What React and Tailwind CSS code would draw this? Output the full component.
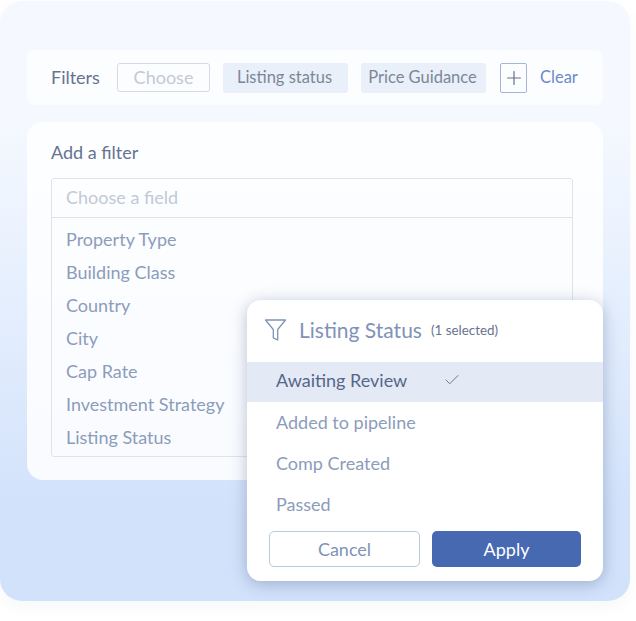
import React from 'react';
import { Check, Plus } from 'lucide-react';

const FIELDS = ['Property Type', 'Building Class', 'Country', 'City', 'Cap Rate', 'Investment Strategy', 'Listing Status'];
const STATUSES = ['Added to pipeline', 'Comp Created', 'Passed'];

const FilterIcon = () => (
  <svg width="23" height="24" viewBox="0 0 23 24" fill="none" stroke="#7f93b8" strokeWidth="1.3" strokeLinejoin="round">
    <path d="M1.5 2h20l-7.8 9.5v10.5l-4.4-2.2v-8.3z" />
  </svg>
);

const App = () => {
  return (
    <div className="w-[636px] h-[621px] bg-white pt-px font-['Lato',sans-serif]">
      <div className="relative w-[630px] h-[600px] rounded-[22px] bg-gradient-to-b from-[#f5f9ff] from-20% to-[#d2e2fb] to-85% px-[27px] pt-[49px] shadow-[0_6px_14px_rgba(120,130,150,0.06)]">
        {/* Filter bar */}
        <div className="h-[55px] rounded-lg bg-white/70 flex items-center pl-6 text-[18px]">
          <span className="w-[66px] text-[#66738f]">Filters</span>
          <div className="w-[93px] h-[29px] border border-[#d5dae3] rounded-[3px] flex items-center justify-center text-[#c3c9d6]">Choose</div>
          <div className="ml-[13px] w-[125px] h-[30px] bg-[#e9f0f9] rounded-[3px] flex items-center justify-center pr-[2px] text-[16.5px] text-[#7d8698]">Listing status</div>
          <div className="ml-[13px] w-[125px] h-[30px] bg-[#e9f0f9] rounded-[3px] flex items-center justify-center pr-[2px] text-[16.5px] text-[#7d8698]">Price Guidance</div>
          <div className="ml-[14px] w-[27px] h-[30px] border border-[#a3b6d9] rounded-[2px] flex items-center justify-center">
            <Plus size={22} strokeWidth={1.3} className="text-[#66708a]" />
          </div>
          <span className="ml-[13px] text-[#6a8bc9] text-[16.5px]">Clear</span>
        </div>

        {/* Add a filter */}
        <div className="mt-[17px] h-[358px] rounded-2xl bg-white/85 pt-[19px] px-6 text-[18px]">
          <div className="text-[#66738f] leading-[22px]">Add a filter</div>
          <div className="mt-[15px] w-[522px] h-[279px] border border-[#dfe3ea] rounded-[3px]">
            <div className="h-[39px] border-b border-[#dfe3ea] flex items-center pb-0.5 px-[14px] text-[#c3c9d6]">Choose a field</div>
            <div className="pt-[5px] px-[14px] text-[#8c9cbb]">
              {FIELDS.map((field) => (
                <div key={field} className="h-[33px] flex items-center">{field}</div>
              ))}
            </div>
          </div>
        </div>

        {/* Status popup */}
        <div className="absolute left-[247px] top-[299px] w-[356px] h-[281px] rounded-[14px] bg-white shadow-[0_3px_16px_rgba(60,80,120,0.35)]">
          <div className="h-[62px] flex items-center pl-[17px] pb-0.5">
            <FilterIcon />
            <span className="ml-3 text-[21px] text-[#8093b7]">Listing Status</span>
            <span className="ml-[9px] text-[13.4px] text-[#66738f]">(1 selected)</span>
          </div>
          <div className="h-10 bg-[#e4eaf5] flex items-center pl-[29px] pb-1 text-[18px] text-[#55668a]">
            <span className="w-[167px]">Awaiting Review</span>
            <Check size={18} strokeWidth={1.3} className="text-[#66738f]" />
          </div>
          <div className="text-[18px] text-[#8c9cbb] pl-[29px]">
            {STATUSES.map((status) => (
              <div key={status} className="h-[41px] flex items-center">{status}</div>
            ))}
          </div>
          <div className="mt-[6px] px-[22px] flex gap-3 text-[18px]">
            <button className="w-[151px] h-9 rounded-[5px] border border-[#b9c7df] bg-white text-[#8093b7]">Cancel</button>
            <button className="w-[149px] h-9 rounded-[5px] bg-[#4669b1] text-white">Apply</button>
          </div>
        </div>
      </div>
    </div>
  );
};

export default App;
